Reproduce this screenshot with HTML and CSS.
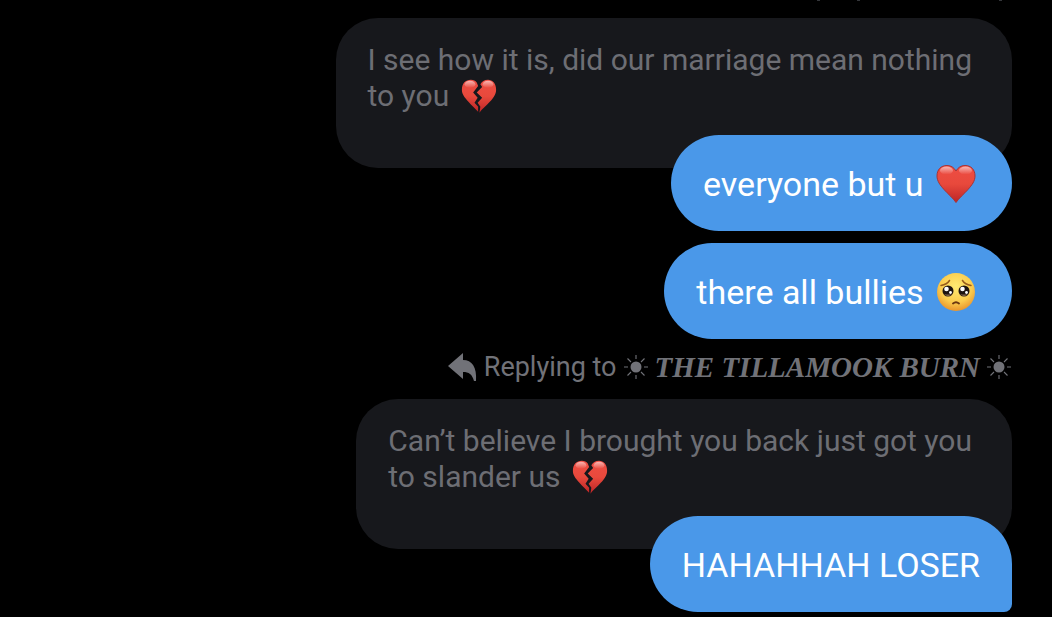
FILE: index.html
```
<!DOCTYPE html>
<html lang="en">
<head>
<meta charset="utf-8">
<meta name="viewport" content="width=device-width, initial-scale=1">
<title>Messages</title>
<link rel="stylesheet" href="styles.css">
</head>
<body>
<svg class="defs" aria-hidden="true">
  <defs>
    <linearGradient id="red" x1="0" y1="0" x2="0" y2="1">
      <stop offset="0" stop-color="#ee4d43"/><stop offset=".5" stop-color="#e8493c"/><stop offset="1" stop-color="#bd2527"/>
    </linearGradient>
    <linearGradient id="shine" x1="0" y1="0" x2="0" y2="1">
      <stop offset="0" stop-color="#fff" stop-opacity=".6"/><stop offset="1" stop-color="#fff" stop-opacity="0"/>
    </linearGradient>
    <radialGradient id="face" cx=".5" cy=".35" r=".65">
      <stop offset="0" stop-color="#ffea72"/><stop offset=".65" stop-color="#fbcb4d"/><stop offset="1" stop-color="#e9952d"/>
    </radialGradient>
    <symbol id="heart" viewBox="0 0 40 40">
      <path d="M20 38.500C17 34 12 30 8 25.500C4 21 1 17 1 12C1 5.500 5 1.500 11 1.500C15 1.500 18 3.500 20 7C22 3.500 25 1.500 29 1.500C35 1.500 39 5.500 39 12C39 17 36 21 32 25.500C28 30 23 34 20 38.500Z" fill="url(#red)" stroke="#a83335" stroke-width="1"/>
      <ellipse cx="10.500" cy="6.500" rx="6.500" ry="4" fill="url(#shine)"/>
      <ellipse cx="29.500" cy="6.500" rx="6.500" ry="4" fill="url(#shine)"/>
    </symbol>
    <symbol id="broken" viewBox="0 0 40 40">
      <path d="M19 37.500C16 34 12 30.500 8 26C4 21.500 1 18 1 13C1 6 5 2 11 2C14 2 16 3 17.500 5L19 9L13.500 16L18.500 22L15 27.500L19 32Z" fill="url(#red)"/>
      <path d="M20.500 38.500C23 35 28 31 32 26.500C36 22 39 18 39 13C39 6 35 2 30 2C26 2 23 4 21.500 7L23.500 10L17.500 16L23.500 22L18.500 27.500L21.500 32Z" fill="url(#red)"/>
      <ellipse cx="10" cy="7" rx="6" ry="4" fill="url(#shine)"/>
      <ellipse cx="30" cy="7" rx="6" ry="4" fill="url(#shine)"/>
    </symbol>
    <symbol id="pleading" viewBox="0 0 40 40">
      <circle cx="20" cy="20" r="19" fill="url(#face)"/>
      <path d="M5 13.500Q11 12.500 13.500 8.500M35 13.500Q29 12.500 26.500 8.500" fill="none" stroke="#985c1b" stroke-width="1.500" stroke-linecap="round"/>
      <circle cx="12" cy="19" r="5.500" fill="#1d1310"/><circle cx="28" cy="19" r="5.500" fill="#1d1310"/>
      <path d="M8 22Q12 26 16 22Q12 23 8 22M24 22Q28 26 32 22Q28 23 24 22" fill="#8a6b50"/>
      <g fill="#fff"><circle cx="10.500" cy="17" r="2.300"/><circle cx="26.500" cy="17" r="2.300"/><circle cx="14.500" cy="20.500" r="1.400"/><circle cx="30.500" cy="20.500" r="1.400"/></g>
      <path d="M17 31.500Q20 29 23 31.500" fill="none" stroke="#6b3711" stroke-width="1.900" stroke-linecap="round"/>
    </symbol>
    <symbol id="sun" viewBox="0 0 26 26">
      <circle cx="13" cy="13" r="5.500" fill="currentColor"/>
      <path d="M13 1V5M13 21V25M1 13H5M21 13H25M4.500 4.500L8 8M18 18L21.500 21.500M4.500 21.500L8 18M18 8L21.500 4.500" stroke="currentColor" stroke-width="1.100"/>
    </symbol>
  </defs>
</svg>
<main class="thread">
  <div class="cutoff" aria-hidden="true"><i></i><i></i><i></i></div>
  <section class="reply">
    <blockquote class="quote">I see how it is, did our marriage mean nothing<br>to you <svg class="emoji" role="img" aria-label="broken heart"><use href="#broken"/></svg></blockquote>
    <p class="bubble">everyone but u <svg class="emoji" role="img" aria-label="red heart"><use href="#heart"/></svg></p>
  </section>
  <p class="bubble">there all bullies <svg class="emoji" role="img" aria-label="pleading face"><use href="#pleading"/></svg></p>
  <div class="context">
    <svg class="arrow" viewBox="0 0 30 30" aria-hidden="true"><path d="M0 14L15 1V8C24 8 29 15 28 29H26C24 22 21 20 15 20V27Z" fill="currentColor"/></svg>
    <span>Replying to</span>
    <svg class="sun" aria-hidden="true"><use href="#sun"/></svg>
    <span class="name">THE TILLAMOOK BURN</span>
    <svg class="sun" aria-hidden="true"><use href="#sun"/></svg>
  </div>
  <section class="reply">
    <blockquote class="quote">Can’t believe I brought you back just got you<br>to slander us <svg class="emoji" role="img" aria-label="broken heart"><use href="#broken"/></svg></blockquote>
    <p class="bubble tail">HAHAHHAH LOSER</p>
  </section>
</main>
</body>
</html>
```
FILE: styles.css
```
* { box-sizing: border-box; }
html { background: #000; }
body { margin: 0; overflow: hidden; font-family: Roboto, sans-serif; }
.defs { position: absolute; width: 0; height: 0; }
.thread { display: flex; flex-direction: column; align-items: flex-end; gap: 12px; padding-right: 40px; }
.cutoff { display: flex; gap: 37px; height: 6px; padding-right: 10px; }
.cutoff i { width: 3px; height: 1px; background: #34363a; }
.cutoff i:last-child { margin-left: 102px; }
.reply { display: flex; flex-direction: column; align-items: flex-end; }
.quote { margin: 0; padding: 24px 40px 54px 32px; border-radius: 42px; background: #17181c; color: #6d6e74; font-size: 30px; line-height: 36px; }
.bubble { margin: 0; padding: 25px 32px 23px; border-radius: 48px; background: #4a98e9; color: #fff; font-size: 34px; line-height: 48px; }
.quote + .bubble { margin-top: -33px; z-index: 1; }
.tail { border-bottom-right-radius: 8px; }
.emoji { width: 40px; height: 40px; margin: 0 4px; vertical-align: -8px; }
.quote .emoji { width: 36px; height: 36px; margin: -2px 4px; vertical-align: -6px; }
.context { display: flex; align-items: center; gap: 6px; height: 36px; padding-bottom: 4px; color: #717278; font-size: 27px; line-height: 32px; }
.arrow { width: 30px; height: 30px; }
.sun { width: 26px; height: 26px; }
.name { font-family: "Liberation Serif", serif; font-size: 29px; font-weight: 700; font-style: italic; }
```
